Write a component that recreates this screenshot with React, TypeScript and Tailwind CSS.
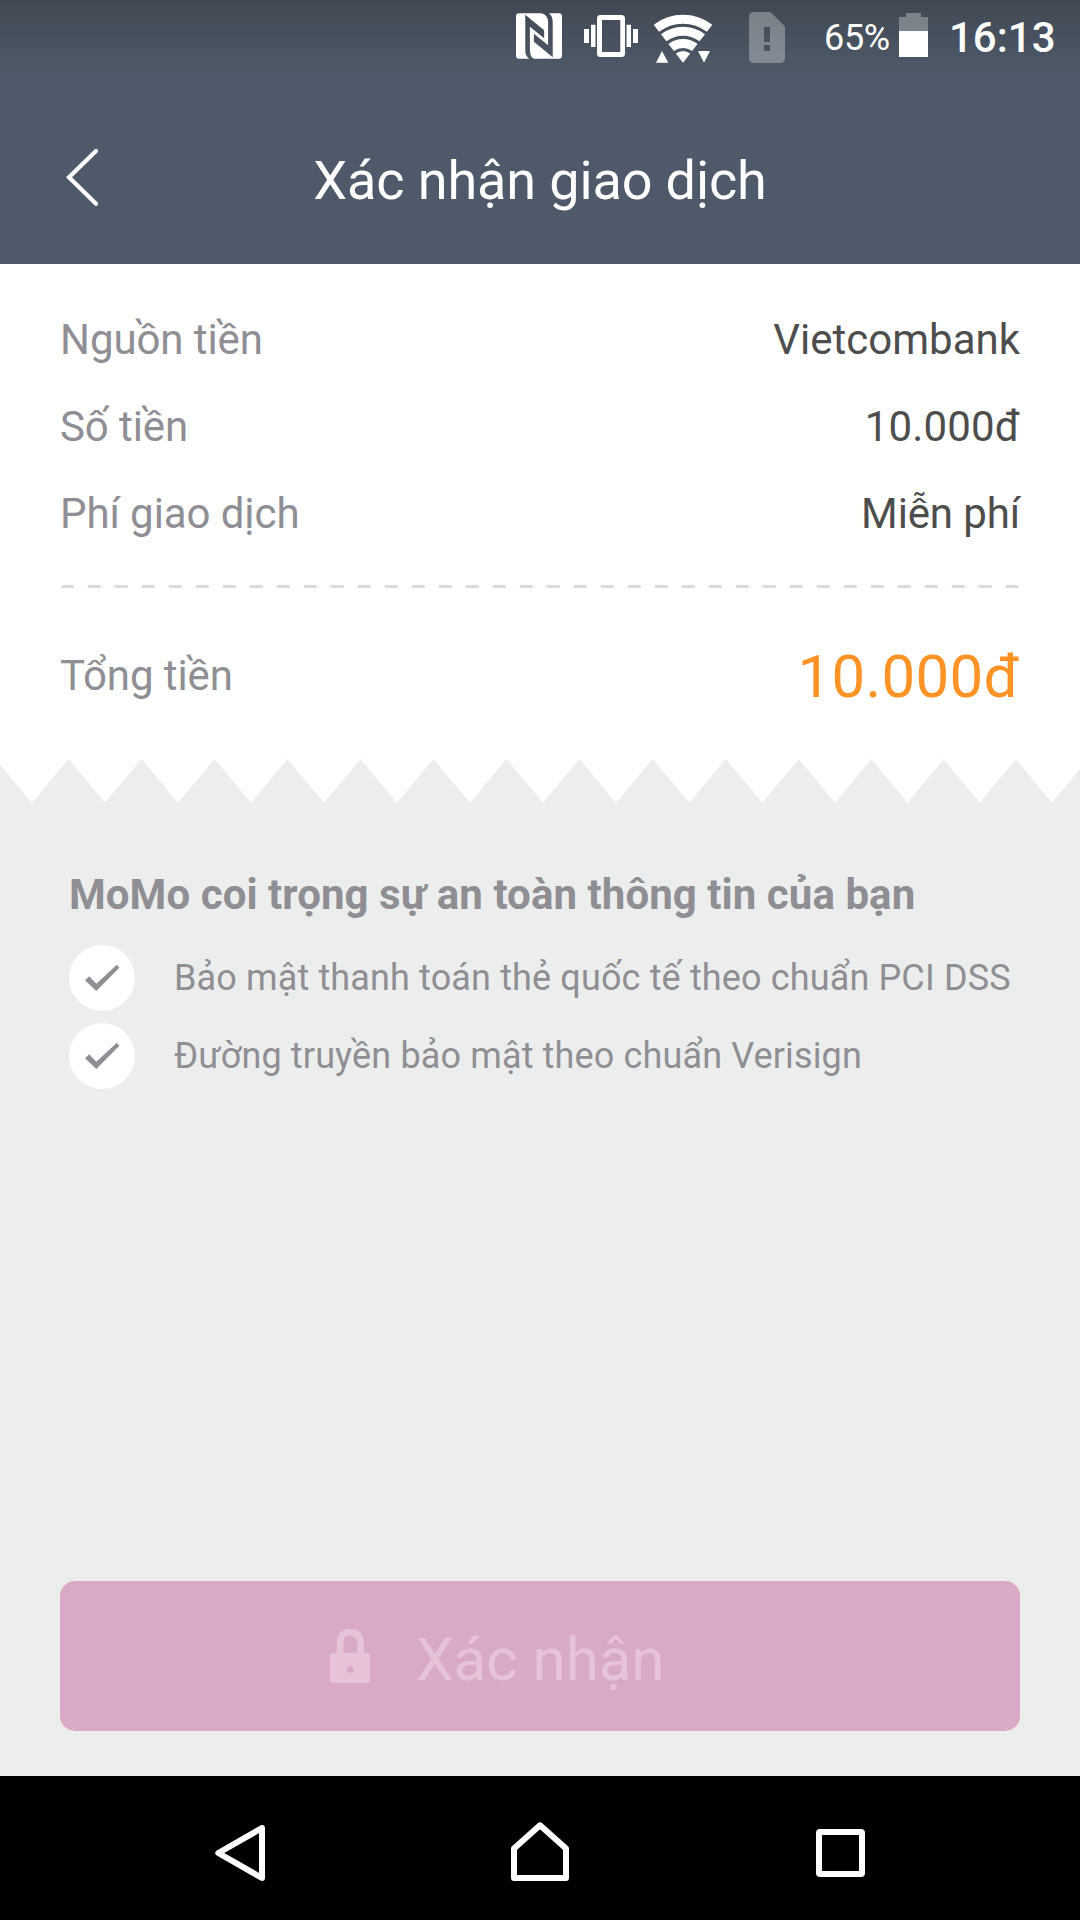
import type { ReactNode } from 'react';

function NfcIcon() {
  return (
    <svg className="h-[46px] w-[46px]" viewBox="0 0 139 138">
      <path
        fill="#fff"
        fillRule="evenodd"
        d="M9 0H130Q139 0 139 9V129Q139 138 130 138H9Q0 138 0 129V9Q0 0 9 0ZM28 5L85 52V76L42 41V111Q42 134 56 138H40Q28 130 28 111ZM111 133L54 86V62L97 97V27Q97 4 76 0H99Q111 8 111 27Z"
      />
    </svg>
  );
}

function VibrateIcon() {
  return (
    <svg className="h-[42px] w-[54px]" viewBox="0 0 54 42" fill="#fff">
      <path d="M0 14h5v14H0zM7 9.7h4.5V32H7zM42.500 9.7H47V32h-4.500zM49 14h5v14h-5z" />
      <path
        fillRule="evenodd"
        d="M16.500 0h21Q41 0 41 3.500v35Q41 42 37.500 42h-21Q13 42 13 38.500v-35Q13 0 16.500 0zM18 5v32h18.300V5z"
      />
    </svg>
  );
}

function WifiIcon() {
  return (
    <svg className="h-[49px] w-[58px]" viewBox="654 14 58 49">
      <g fill="none" stroke="#fff" strokeWidth="9">
        <path d="M656.300 28.300A43.500 43.500 0 0 1 709.700 28.300" />
        <path d="M663.700 37.800A31.500 31.500 0 0 1 702.300 37.800" />
        <path d="M671.200 47.500A19.200 19.200 0 0 1 694.800 47.500" />
      </g>
      <path
        fill="#fff"
        d="M683 62.700L675.800 53.500Q683 48.500 690.200 53.500ZM662 51L668.300 62.700H656ZM698 51H710L704 62.700Z"
      />
    </svg>
  );
}

function SimIcon() {
  return (
    <svg className="h-[51px] w-[36px]" viewBox="0 0 36 51">
      <path
        fill="#fff"
        fillOpacity=".3"
        fillRule="evenodd"
        d="M5 0H21.500L36 14.500V46Q36 51 31 51H5Q0 51 0 46V5Q0 0 5 0ZM15 15V30H21V15ZM15 33V39H21V33Z"
      />
    </svg>
  );
}

function BatteryIcon() {
  return (
    <svg className="h-[44px] w-[29px]" viewBox="0 0 29 44" fill="#fff">
      <path fillOpacity=".3" d="M7 0h15v4h7v14H0V4h7z" />
      <path d="M0 18h29v26H0z" />
    </svg>
  );
}

function StatusBar() {
  return (
    <div className="flex h-[72px] bg-linear-to-b from-[#404852] to-[#4e5a69] pl-[516px] text-white">
      <div className="mt-[13px]"><NfcIcon /></div>
      <div className="mt-[15px] ml-[22px]"><VibrateIcon /></div>
      <div className="mt-[14px] ml-[16px]"><WifiIcon /></div>
      <div className="mt-[12px] ml-[37px]"><SimIcon /></div>
      <span className="ml-[39px] w-[66px] text-[36px] leading-[76px] tracking-[-0.3px] whitespace-nowrap">65%</span>
      <div className="mt-[13px] ml-[9px]"><BatteryIcon /></div>
      <span className="ml-[21px] text-[42px] leading-[75px] font-medium whitespace-nowrap">16:13</span>
    </div>
  );
}

function Header() {
  return (
    <header className="flex h-[192px] items-start bg-[#4e5a69] text-white">
      <button className="mt-[75px] ml-[64px] w-[38px]" aria-label="Back">
        <svg className="h-[64px] w-[38px]" viewBox="0 0 38 64">
          <path d="M32 4L5 30.300L32 56.700" fill="none" stroke="#fff" strokeWidth="4.200" strokeLinecap="round" />
        </svg>
      </button>
      <h1 className="mr-[102px] grow pt-[72px] text-center text-[54px] leading-[73px] font-normal tracking-[-0.13px]">
        Xác nhận giao dịch
      </h1>
    </header>
  );
}

function Row({ label, value }: { label: string; value: ReactNode }) {
  return (
    <div className="flex h-[87px] items-center justify-between">
      <span className="tracking-[-0.08px] text-[#8f8e94]">{label}</span>
      <span className="text-[#4d4d4d]">{value}</span>
    </div>
  );
}

function Receipt() {
  return (
    <section>
      <div className="h-[495px] bg-white px-[60px] pt-[32px] text-[42px] leading-[50px]">
        <Row label="Nguồn tiền" value="Vietcombank" />
        <Row label="Số tiền" value={<span className="tracking-[0.15px]">10.000đ</span>} />
        <Row label="Phí giao dịch" value={<span className="tracking-[-0.12px]">Miễn phí</span>} />
        <div className="mt-[28px] h-[3px] bg-[repeating-linear-gradient(90deg,#dadada_0_13.5px,transparent_13.5px_27px)] bg-position-[0.75px_0] [clip-path:polygon(3px_0,957px_0,100%_100%,0_100%)]" />
        <div className="flex h-[171px] items-center justify-between pt-[5px]">
          <span className="tracking-[-0.08px] text-[#8f8e94]">Tổng tiền</span>
          <span className="mr-[0.5px] pt-[2px] text-[60px] leading-[70px] tracking-[0.25px] text-[#ff9326]">10.000đ</span>
        </div>
      </div>
      <svg className="block h-[44px] w-full" viewBox="0 0 1080 44">
        <path
          fill="#fff"
          d="M0 0V6L32 43.700L68.500 0L105 43.700L141.500 0L178 43.700L214.500 0L251 43.700L287.500 0L324 43.700L360.500 0L397 43.700L433.500 0L470 43.700L506.500 0L543 43.700L579.600 0L616 43.700L652.600 0L689.300 43.700L725.800 0L762.300 43.700L798.800 0L835 43.700L871.300 0L907.500 43.700L943.600 0L979.700 43.700L1015.700 0L1051.800 43.700L1080 10V0Z"
        />
      </svg>
    </section>
  );
}

function Assurance({ children }: { children: ReactNode }) {
  return (
    <li className="flex h-[66px] items-center">
      <svg className="h-[66px] w-[66px] rounded-full bg-white" viewBox="0 0 66 66">
        <path d="M16 35.300L20.300 31.300L27.300 38.800L47.800 19.700L50.300 22.700L27.300 46Z" fill="#8f8e94" />
      </svg>
      <span className="ml-[39px] text-[36px] leading-[66px] tracking-[0.14px] whitespace-nowrap">{children}</span>
    </li>
  );
}

function ConfirmButton() {
  return (
    <button className="mx-[60px] mt-auto mb-[45px] flex h-[150px] items-center rounded-[15px] bg-[#dba9c8] text-[#e6c3d9]">
      <svg className="ml-[270px] h-[54px] w-[40px]" viewBox="0 0 40 54">
        <path d="M10.100 24V13.500Q10.100 3.400 20.200 3.400T30.600 13.500V24" fill="none" stroke="currentColor" strokeWidth="6.700" />
        <path
          fill="currentColor"
          fillRule="evenodd"
          d="M3.500 23.700h33Q40 23.700 40 27.200v23.300Q40 54 36.500 54h-33Q0 54 0 50.500V27.200Q0 23.700 3.500 23.700zM20.200 36.800a3.500 3.500 0 0 0 0 7a3.500 3.500 0 0 0 0-7z"
        />
      </svg>
      <span className="ml-[46px] pt-[7px] text-[60px] leading-[70px]">Xác nhận</span>
    </button>
  );
}

function NavBar() {
  return (
    <nav className="flex h-[144px] items-start bg-black pl-[215px]">
      <svg className="mt-[49px] h-[56px] w-[50px]" viewBox="0 0 50 56">
        <path d="M3.300 28L47 3V53Z" fill="none" stroke="#fff" strokeWidth="6" strokeLinejoin="round" />
      </svg>
      <svg className="mt-[46px] ml-[246px] h-[59px] w-[58px]" viewBox="0 0 58 59">
        <path d="M29 3.300L55 26.500V56H3V26.500Z" fill="none" stroke="#fff" strokeWidth="6" strokeLinejoin="round" />
      </svg>
      <div className="mt-[53px] ml-[247px] h-[48px] w-[49px] rounded-[4px] border-6 border-white" />
    </nav>
  );
}

export default function App() {
  return (
    <div className="flex h-[1920px] w-[1080px] flex-col overflow-hidden bg-[#eceeed] font-['Roboto',sans-serif]">
      <StatusBar />
      <Header />
      <Receipt />
      <section className="pt-[64px] pl-[69px] text-[#8f8e94]">
        <h2 className="text-[42px] leading-[56px] font-bold tracking-[0.06px]">MoMo coi trọng sự an toàn thông tin của bạn</h2>
        <ul className="mt-[22px] flex flex-col gap-[12px]">
          <Assurance>Bảo mật thanh toán thẻ quốc tế theo chuẩn PCI DSS</Assurance>
          <Assurance>Đường truyền bảo mật theo chuẩn Verisign</Assurance>
        </ul>
      </section>
      <ConfirmButton />
      <NavBar />
    </div>
  );
}
